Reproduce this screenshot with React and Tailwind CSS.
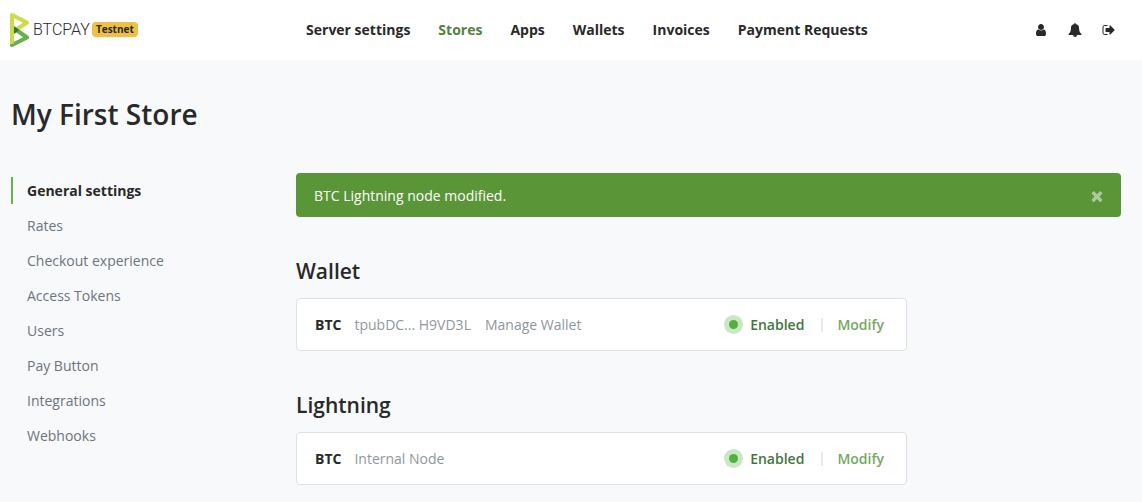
const PATHS = {
  user: "M1536 1399q0 109-62.5 187t-150.5 78h-854q-88 0-150.5-78t-62.5-187q0-85 8.5-160.5t31.5-152 58.5-131 94-89 134.5-34.5q131 128 313 128t313-128q76 0 134.5 34.5t94 89 58.5 131 31.5 152 8.5 160.5zm-256-887q0 159-112.5 271.5t-271.5 112.5-271.5-112.5-112.5-271.5 112.5-271.5 271.5-112.5 271.5 112.5 112.5 271.5z",
  bell: "M912 1696q0-16-16-16-59 0-101.5-42.5t-42.5-101.5q0-16-16-16t-16 16q0 73 51.5 124.5t124.5 51.5q16 0 16-16zm816-288q0 52-38 90t-90 38h-448q0 106-75 181t-181 75-181-75-75-181h-448q-52 0-90-38t-38-90q50-42 91-88t85-119.5 74.5-158.5 50-206 19.5-260q0-152 117-282.5t307-158.5q-8-19-8-39 0-40 28-68t68-28 68 28 28 68q0 20-8 39 190 28 307 158.5t117 282.5q0 139 19.5 260t50 206 74.5 158.5 85 119.5 91 88z",
  signOut: "M704 1440q0 4 1 20t.5 26.5-3 23.5-10 19.5-20.5 6.5h-320q-119 0-203.5-84.5t-84.5-203.5v-704q0-119 84.5-203.5t203.5-84.5h320q13 0 22.5 9.5t9.5 22.5q0 4 1 20t.5 26.5-3 23.5-10 19.5-20.5 6.5h-320q-66 0-113 47t-47 113v704q0 66 47 113t113 47h312l11.5 1 11.5 3 8 5.5 7 9 2 13.5zm928-544q0 26-19 45l-544 544q-19 19-45 19t-45-19-19-45v-288h-448q-26 0-45-19t-19-45v-384q0-26 19-45t45-19h448v-288q0-26 19-45t45-19 45 19l544 544q19 19 19 45z",
  times: "M1490 1322q0 40-28 68l-136 136q-28 28-68 28t-68-28l-294-294-294 294q-28 28-68 28t-68-28l-136-136q-28-28-28-68t28-68l294-294-294-294q-28-28-28-68t28-68l136-136q28-28 68-28t68 28l294 294 294-294q28-28 68-28t68 28l136 136q28 28 28 68t-28 68l-294 294 294 294q28 28 28 68z",
};

function Icon({ name, className }) {
  return (
    <svg viewBox="0 0 1792 1792" className={className} fill="currentColor" aria-hidden="true">
      <path d={PATHS[name]} />
    </svg>
  );
}

function Logo() {
  return (
    <svg viewBox="0 0 20 34" className="h-[34px] w-5 shrink-0" fill="none" aria-hidden="true">
      <path d="M2 32L17 24.5L5 16" stroke="#6ab04a" strokeWidth="4" strokeLinecap="round" strokeLinejoin="round" />
      <path d="M4 18L17 9.5L2 2V29" stroke="#ccdc48" strokeWidth="4" strokeLinecap="round" strokeLinejoin="round" />
      <path d="M4 13L9.500 17L4 21Z" fill="#2f7a44" />
    </svg>
  );
}

const NAV = ["Server settings", "Stores", "Apps", "Wallets", "Invoices", "Payment Requests"];
const SIDE = ["General settings", "Rates", "Checkout experience", "Access Tokens", "Users", "Pay Button", "Integrations", "Webhooks"];
const ACTIONS = [["user", "Account"], ["bell", "Notifications"], ["signOut", "Sign out"]];

function Section({ title, children }) {
  return (
    <section className="mt-10">
      <h2 className="text-[21px] leading-7 font-semibold">{title}</h2>
      <div className="mt-[13px] flex h-[53px] max-w-[611px] items-center rounded border border-[#dee2e6] bg-white pr-[22px] pl-[18px]">
        <span className="mr-[13px] font-bold">BTC</span>
        <div className="flex gap-3.5 text-[#8f979e]">{children}</div>
        <div className="ml-auto flex items-center font-semibold">
          <span className="mr-[7px] flex size-[19px] items-center justify-center rounded-full bg-[#cae6c5]">
            <span className="size-[9px] rounded-full bg-[#51b13e]" />
          </span>
          <span className="text-[#44753b]">Enabled</span>
          <span className="mr-3.5 ml-[17px] h-3.5 w-0.5 bg-[#e9ecef]" />
          <a href="#modify" className="text-[#75a863]">Modify</a>
        </div>
      </div>
    </section>
  );
}

export default function App() {
  return (
    <div className="min-h-screen bg-[#f8f9fb] font-['Open_Sans',sans-serif] text-sm text-[#292929]">
      <header className="flex h-[60px] items-center bg-white pr-[26px] pl-2.5">
        <a href="#home" className="flex items-center pb-px">
          <Logo />
          <span className="ml-[3px] font-[Roboto,sans-serif] text-base font-light">BTCPAY</span>
          <span className="ml-0.5 rounded bg-[#f0c043] px-1 text-[10px] leading-[15px] font-bold">Testnet</span>
        </a>
        <nav className="flex flex-1 justify-center gap-7 pl-0.5 font-bold">
          {NAV.map((n) => (
            <a key={n} href="#nav" className={n === "Stores" ? "text-[#55803e]" : ""}>{n}</a>
          ))}
        </nav>
        <div className="flex items-center gap-5">
          {ACTIONS.map(([icon, label]) => (
            <button key={icon} type="button" aria-label={label}>
              <Icon name={icon} className="size-3.5" />
            </button>
          ))}
        </div>
      </header>
      <main className="pt-9 pr-[21px] pb-4 pl-[11px]">
        <h1 className="text-[28px] leading-9 font-semibold">My First Store</h1>
        <div className="mt-[41px] flex">
          <nav className="mt-1 flex w-[285px] shrink-0 flex-col gap-2">
            {SIDE.map((s, i) => (
              <a
                key={s}
                href="#section"
                className={i === 0 ? "border-l-2 border-[#6ab04a] pl-3.5 leading-[27px] font-bold" : "border-l-2 border-transparent pl-3.5 leading-[27px] text-[#6c757d]"}
              >
                {s}
              </a>
            ))}
          </nav>
          <div className="min-w-0 flex-1">
            <div role="alert" className="flex h-11 items-center justify-between rounded bg-[#5a9537] pt-px pr-4 pl-[18px] text-white">
              <span>BTC Lightning node modified.</span>
              <button type="button" aria-label="Close" className="opacity-50">
                <Icon name="times" className="size-4" />
              </button>
            </div>
            <Section title="Wallet">
              <span>tpubDC... H9VD3L</span>
              <a href="#manage">Manage Wallet</a>
            </Section>
            <Section title="Lightning">
              <span>Internal Node</span>
            </Section>
          </div>
        </div>
      </main>
    </div>
  );
}
